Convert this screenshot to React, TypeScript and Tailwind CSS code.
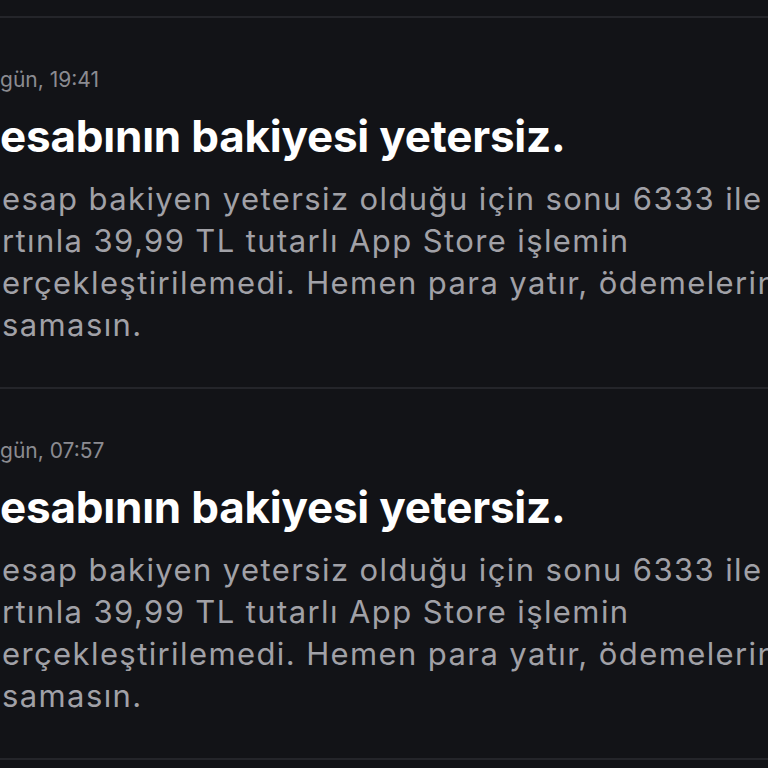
const notices = [
  { time: 'gün, 19:41' },
  { time: 'gün, 07:57' },
];

const bodyLines = [
  'esap bakiyen yetersiz olduğu için sonu 6333 ile',
  'rtınla 39,99 TL tutarlı App Store işlemin',
  'erçekleştirilemedi. Hemen para yatır, ödemelerin',
  'samasın.',
];

function Notice({ time }: { time: string }) {
  return (
    <div className="flex flex-col">
      <div className="h-[2px] bg-[#24252a]" />
      <div className="pt-[46px] pb-[41px] flex flex-col">
        <div className="text-[21px] leading-[32px] text-[#8b8b91] whitespace-nowrap">{time}</div>
        <div className="mt-[14px] text-[44px] leading-[52px] font-bold text-white tracking-[-0.005em] whitespace-nowrap">
          esabının bakiyesi yetersiz.
        </div>
        <div className="mt-[16px] flex flex-col pl-[2px]">
          {bodyLines.map(l => (
            <div key={l} className="text-[31px] leading-[42px] text-[#a1a1a7] tracking-[0.045em] whitespace-nowrap">{l}</div>
          ))}
        </div>
      </div>
    </div>
  );
}

export default function App() {
  return (
    <div className="w-[768px] h-[768px] overflow-hidden bg-[#121317] pt-[16px] font-['Inter',sans-serif]">
      {notices.map(n => <Notice key={n.time} time={n.time} />)}
      <div className="h-[2px] bg-[#24252a]" />
    </div>
  );
}
